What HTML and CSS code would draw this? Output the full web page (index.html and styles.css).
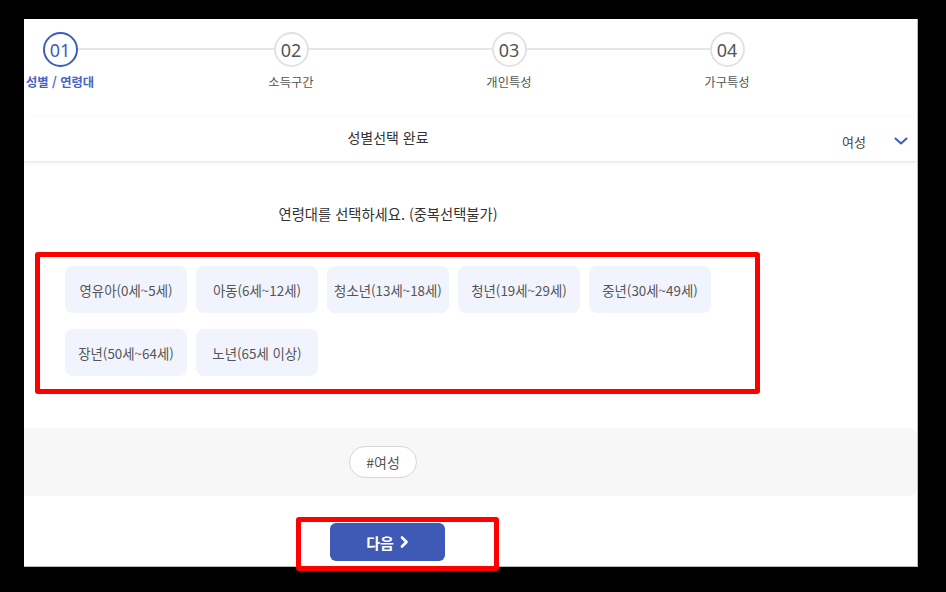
FILE: index.html
```html
<!DOCTYPE html>
<html lang="ko">
<head>
<meta charset="utf-8">
<title>연령대 선택</title>
<link rel="stylesheet" href="styles.css">
</head>
<body>
<div class="page">
  <div class="panel">
    <div class="stepper">
      <div class="step active">
        <div class="circle">01</div>
        <div class="label">성별 / 연령대</div>
      </div>
      <div class="step">
        <div class="circle">02</div>
        <div class="label">소득구간</div>
      </div>
      <div class="step">
        <div class="circle">03</div>
        <div class="label">개인특성</div>
      </div>
      <div class="step">
        <div class="circle">04</div>
        <div class="label">가구특성</div>
      </div>
    </div>

    <div class="summary">
      <div class="summary-title">성별선택 완료</div>
      <div class="summary-value">
        <span>여성</span>
        <svg class="chev" width="14" height="8" viewBox="0 0 14 8"><polyline points="1.5,1.5 7,6.5 12.5,1.5" fill="none" stroke="#3f5bbf" stroke-width="2" stroke-linecap="round" stroke-linejoin="round"/></svg>
      </div>
    </div>

    <div class="content">
      <p class="question">연령대를 선택하세요. (중복선택불가)</p>
      <div class="chips">
        <button class="chip">영유아(0세~5세)</button>
        <button class="chip">아동(6세~12세)</button>
        <button class="chip">청소년(13세~18세)</button>
        <button class="chip">청년(19세~29세)</button>
        <button class="chip">중년(30세~49세)</button>
        <button class="chip">장년(50세~64세)</button>
        <button class="chip">노년(65세 이상)</button>
      </div>
    </div>

    <div class="tags">
      <div class="tags-inner"><span class="tag">#여성</span></div>
    </div>

    <div class="actions">
      <button class="next">다음
        <svg width="10" height="12" viewBox="0 0 10 12"><polyline points="3,1.5 7.5,6 3,10.5" fill="none" stroke="#fff" stroke-width="2.6" stroke-linecap="round" stroke-linejoin="round"/></svg>
      </button>
    </div>
  </div>

  <div class="mark mark-chips"></div>
  <div class="mark mark-next"></div>
</div>
</body>
</html>
```

FILE: styles.css
```css
* { box-sizing: border-box; }

html, body {
  margin: 0;
  background: #000;
}

body {
  font-family: "Noto Sans CJK KR", "Noto Sans", sans-serif;
  color: #333;
}

.page {
  position: relative;
  width: 946px;
  height: 592px;
  padding: 19px 28px 25px 24px;
}

.panel {
  width: 894px;
  height: 548px;
  background: #fff;
  border-right: 1px solid #bbb;
  border-bottom: 1px solid #bbb;
  overflow: hidden;
}

/* stepper */
.stepper {
  position: relative;
  display: flex;
  gap: 146px;
  padding-top: 13px;
}

.stepper::before {
  content: "";
  position: absolute;
  left: 36px;
  width: 667px;
  top: 29px;
  height: 2px;
  background: #e6e6e6;
}

.step {
  position: relative;
  width: 72px;
  display: flex;
  flex-direction: column;
  align-items: center;
}

.step:first-child { margin-right: 13px; }

.circle {
  width: 35px;
  height: 35px;
  border-radius: 50%;
  border: 2px solid #e2e2e2;
  background: #fff;
  display: flex;
  align-items: center;
  justify-content: center;
  font-family: "Noto Sans", sans-serif;
  font-size: 18px;
  color: #555;
  line-height: 1;
}

.label {
  margin-top: 6px;
  font-size: 12.3px;
  line-height: 18px;
  color: #555;
  white-space: nowrap;
}

.step.active .circle {
  border-color: #3f5bbf;
  color: #3f5bbf;
}

.step.active .label {
  color: #4a64c4;
  font-weight: 700;
}

/* summary bar */
.summary {
  display: grid;
  grid-template-columns: 728px 1fr;
  align-items: center;
  height: 45px;
  margin-top: 26px;
  border-bottom: 1px solid #ececec;
  box-shadow: 0 1px 3px rgba(0, 0, 0, 0.08);
}

.summary-title {
  text-align: center;
  font-size: 14px;
  line-height: 20px;
  color: #333;
  padding-bottom: 5px;
}

.summary-value {
  display: flex;
  align-items: center;
  justify-content: flex-end;
  gap: 28px;
  padding-right: 9px;
  padding-top: 4px;
  font-size: 13px;
  color: #444;
}

.chev { display: block; }

/* content */
.content {
  width: 728px;
  padding-top: 42px;
}

.question {
  margin: 0;
  text-align: center;
  font-size: 14.3px;
  line-height: 20px;
  color: #333;
}

.chips {
  width: 646px;
  margin: 42px auto 0;
  display: grid;
  grid-template-columns: repeat(5, 122px);
  column-gap: 9px;
  row-gap: 16px;
}

.chip {
  height: 47px;
  border: 0;
  border-radius: 8px;
  background: #f1f4fd;
  font-family: inherit;
  font-size: 13.4px;
  color: #555;
  padding: 0;
  white-space: nowrap;
}

/* tags */
.tags {
  margin-top: 52px;
  height: 68px;
  background: #f7f7f7;
  border-radius: 0 8px 8px 0;
  padding-top: 18px;
}

.tags-inner {
  width: 718px;
  display: flex;
  justify-content: center;
}

.tag {
  display: inline-flex;
  align-items: center;
  height: 32px;
  padding: 0 16px;
  border: 1px solid #d6d6d6;
  border-radius: 16px;
  background: #fff;
  font-size: 14px;
  color: #555;
}

/* actions */
.actions {
  width: 728px;
  display: flex;
  justify-content: center;
  padding-top: 27px;
  padding-right: 1px;
}

.next {
  width: 115px;
  height: 38px;
  border: 0;
  border-radius: 6px;
  background: #3f5ab6;
  color: #fff;
  font-family: inherit;
  font-size: 15px;
  font-weight: 700;
  display: flex;
  align-items: center;
  justify-content: center;
  gap: 5px;
  padding: 0;
}

.next svg { display: block; }

/* annotation marks */
.mark {
  position: absolute;
  border: 5px solid #ff0000;
  border-radius: 3px;
}

.mark-chips {
  left: 35px;
  top: 252px;
  width: 725px;
  height: 142px;
}

.mark-next {
  left: 296px;
  top: 517px;
  width: 203px;
  height: 54px;
}
```
